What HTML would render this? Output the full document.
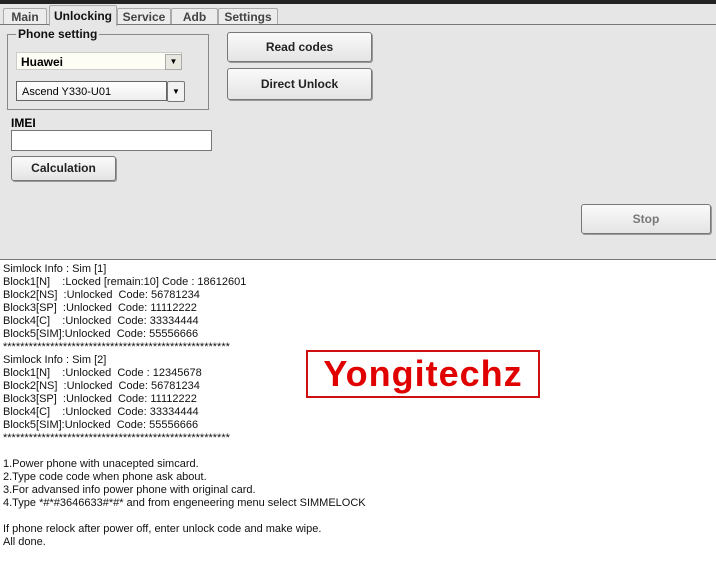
<!DOCTYPE html>
<html><head><style>
body{margin:0;width:716px;height:567px;background:#fff;font-family:"Liberation Sans",sans-serif;position:relative;overflow:hidden}
.top{position:absolute;left:0;top:0;width:716px;height:260px;background:#e6e6e6}
.dark{position:absolute;left:0;top:0;width:716px;height:4px;background:#222}
.tab{position:absolute;top:8px;height:16px;font-size:12px;font-weight:bold;color:#444;border:1px solid #aaa;border-bottom:none;background:#ececec;text-align:center;line-height:16px;border-radius:2px 2px 0 0}
.line{position:absolute;left:0;top:24px;width:716px;height:1px;background:#777}
.btn{position:absolute;border:1px solid #777;border-radius:3px;background:linear-gradient(#fafafa,#e4e4e4);font-size:12px;font-weight:bold;color:#222;text-align:center;box-shadow:1px 1px 0 #999}
.abs{position:absolute}
.out{position:absolute;left:3px;top:263px;font-size:11px;line-height:13px;color:#111;white-space:pre}
</style></head><body>
<div class="top"></div>
<div class="dark"></div>
<div class="tab" style="left:3px;width:42px">Main</div>
<div class="tab" style="left:49px;width:66px;top:5px;height:20px;background:#e6e6e6;color:#111;line-height:20px;z-index:2">Unlocking</div>
<div class="tab" style="left:117px;width:52px">Service</div>
<div class="tab" style="left:171px;width:45px">Adb</div>
<div class="tab" style="left:218px;width:58px">Settings</div>
<div class="line"></div>
<div class="abs" style="left:7px;top:34px;width:200px;height:74px;border:1px solid #888"></div>
<div class="abs" style="left:16px;top:27px;background:#e6e6e6;padding:0 2px;font-size:12px;font-weight:bold;color:#111">Phone setting</div>
<div class="abs" style="left:16px;top:52px;width:166px;height:18px;border:1px solid #ccc;background:#fdfdf6;font-size:12px;font-weight:bold;line-height:18px;padding-left:4px;box-sizing:border-box">Huawei</div>
<div class="abs" style="left:165px;top:54px;width:15px;height:14px;border:1px solid #aaa;background:#e8e8e0;font-size:8px;text-align:center;line-height:14px">▼</div>
<div class="abs" style="left:16px;top:81px;width:151px;height:20px;border:1px solid #666;background:linear-gradient(#fff,#eee);font-size:11px;line-height:20px;padding-left:5px;box-sizing:border-box">Ascend Y330-U01</div>
<div class="abs" style="left:167px;top:81px;width:16px;height:19px;border:1px solid #777;border-radius:2px;background:#f2f2f2;font-size:8px;text-align:center;line-height:19px">▼</div>
<div class="abs" style="left:11px;top:116px;font-size:12px;font-weight:bold">IMEI</div>
<div class="abs" style="left:11px;top:130px;width:201px;height:21px;border:1px solid #777;background:#fff;box-sizing:border-box"></div>
<div class="btn" style="left:11px;top:156px;width:103px;height:23px;line-height:23px">Calculation</div>
<div class="btn" style="left:227px;top:32px;width:143px;height:28px;line-height:28px">Read codes</div>
<div class="btn" style="left:227px;top:68px;width:143px;height:30px;line-height:30px">Direct Unlock</div>
<div class="btn" style="left:581px;top:204px;width:128px;height:28px;line-height:28px;color:#777">Stop</div>
<div class="abs" style="left:0;top:259px;width:716px;height:1px;background:#777"></div>
<div class="out">Simlock Info : Sim [1]
Block1[N]    :Locked [remain:10] Code : 18612601
Block2[NS]  :Unlocked  Code: 56781234
Block3[SP]  :Unlocked  Code: 11112222
Block4[C]    :Unlocked  Code: 33334444
Block5[SIM]:Unlocked  Code: 55556666
*****************************************************
Simlock Info : Sim [2]
Block1[N]    :Unlocked  Code : 12345678
Block2[NS]  :Unlocked  Code: 56781234
Block3[SP]  :Unlocked  Code: 11112222
Block4[C]    :Unlocked  Code: 33334444
Block5[SIM]:Unlocked  Code: 55556666
*****************************************************

1.Power phone with unacepted simcard.
2.Type code code when phone ask about.
3.For advansed info power phone with original card.
4.Type *#*#3646633#*#* and from engeneering menu select SIMMELOCK

If phone relock after power off, enter unlock code and make wipe.
All done.</div>
<div class="abs" style="left:306px;top:350px;width:230px;height:44px;border:2px solid #d01010;text-align:center;font-size:36px;font-weight:bold;color:#e00000;line-height:44px;letter-spacing:1px">Yongitechz</div>
</body></html>
